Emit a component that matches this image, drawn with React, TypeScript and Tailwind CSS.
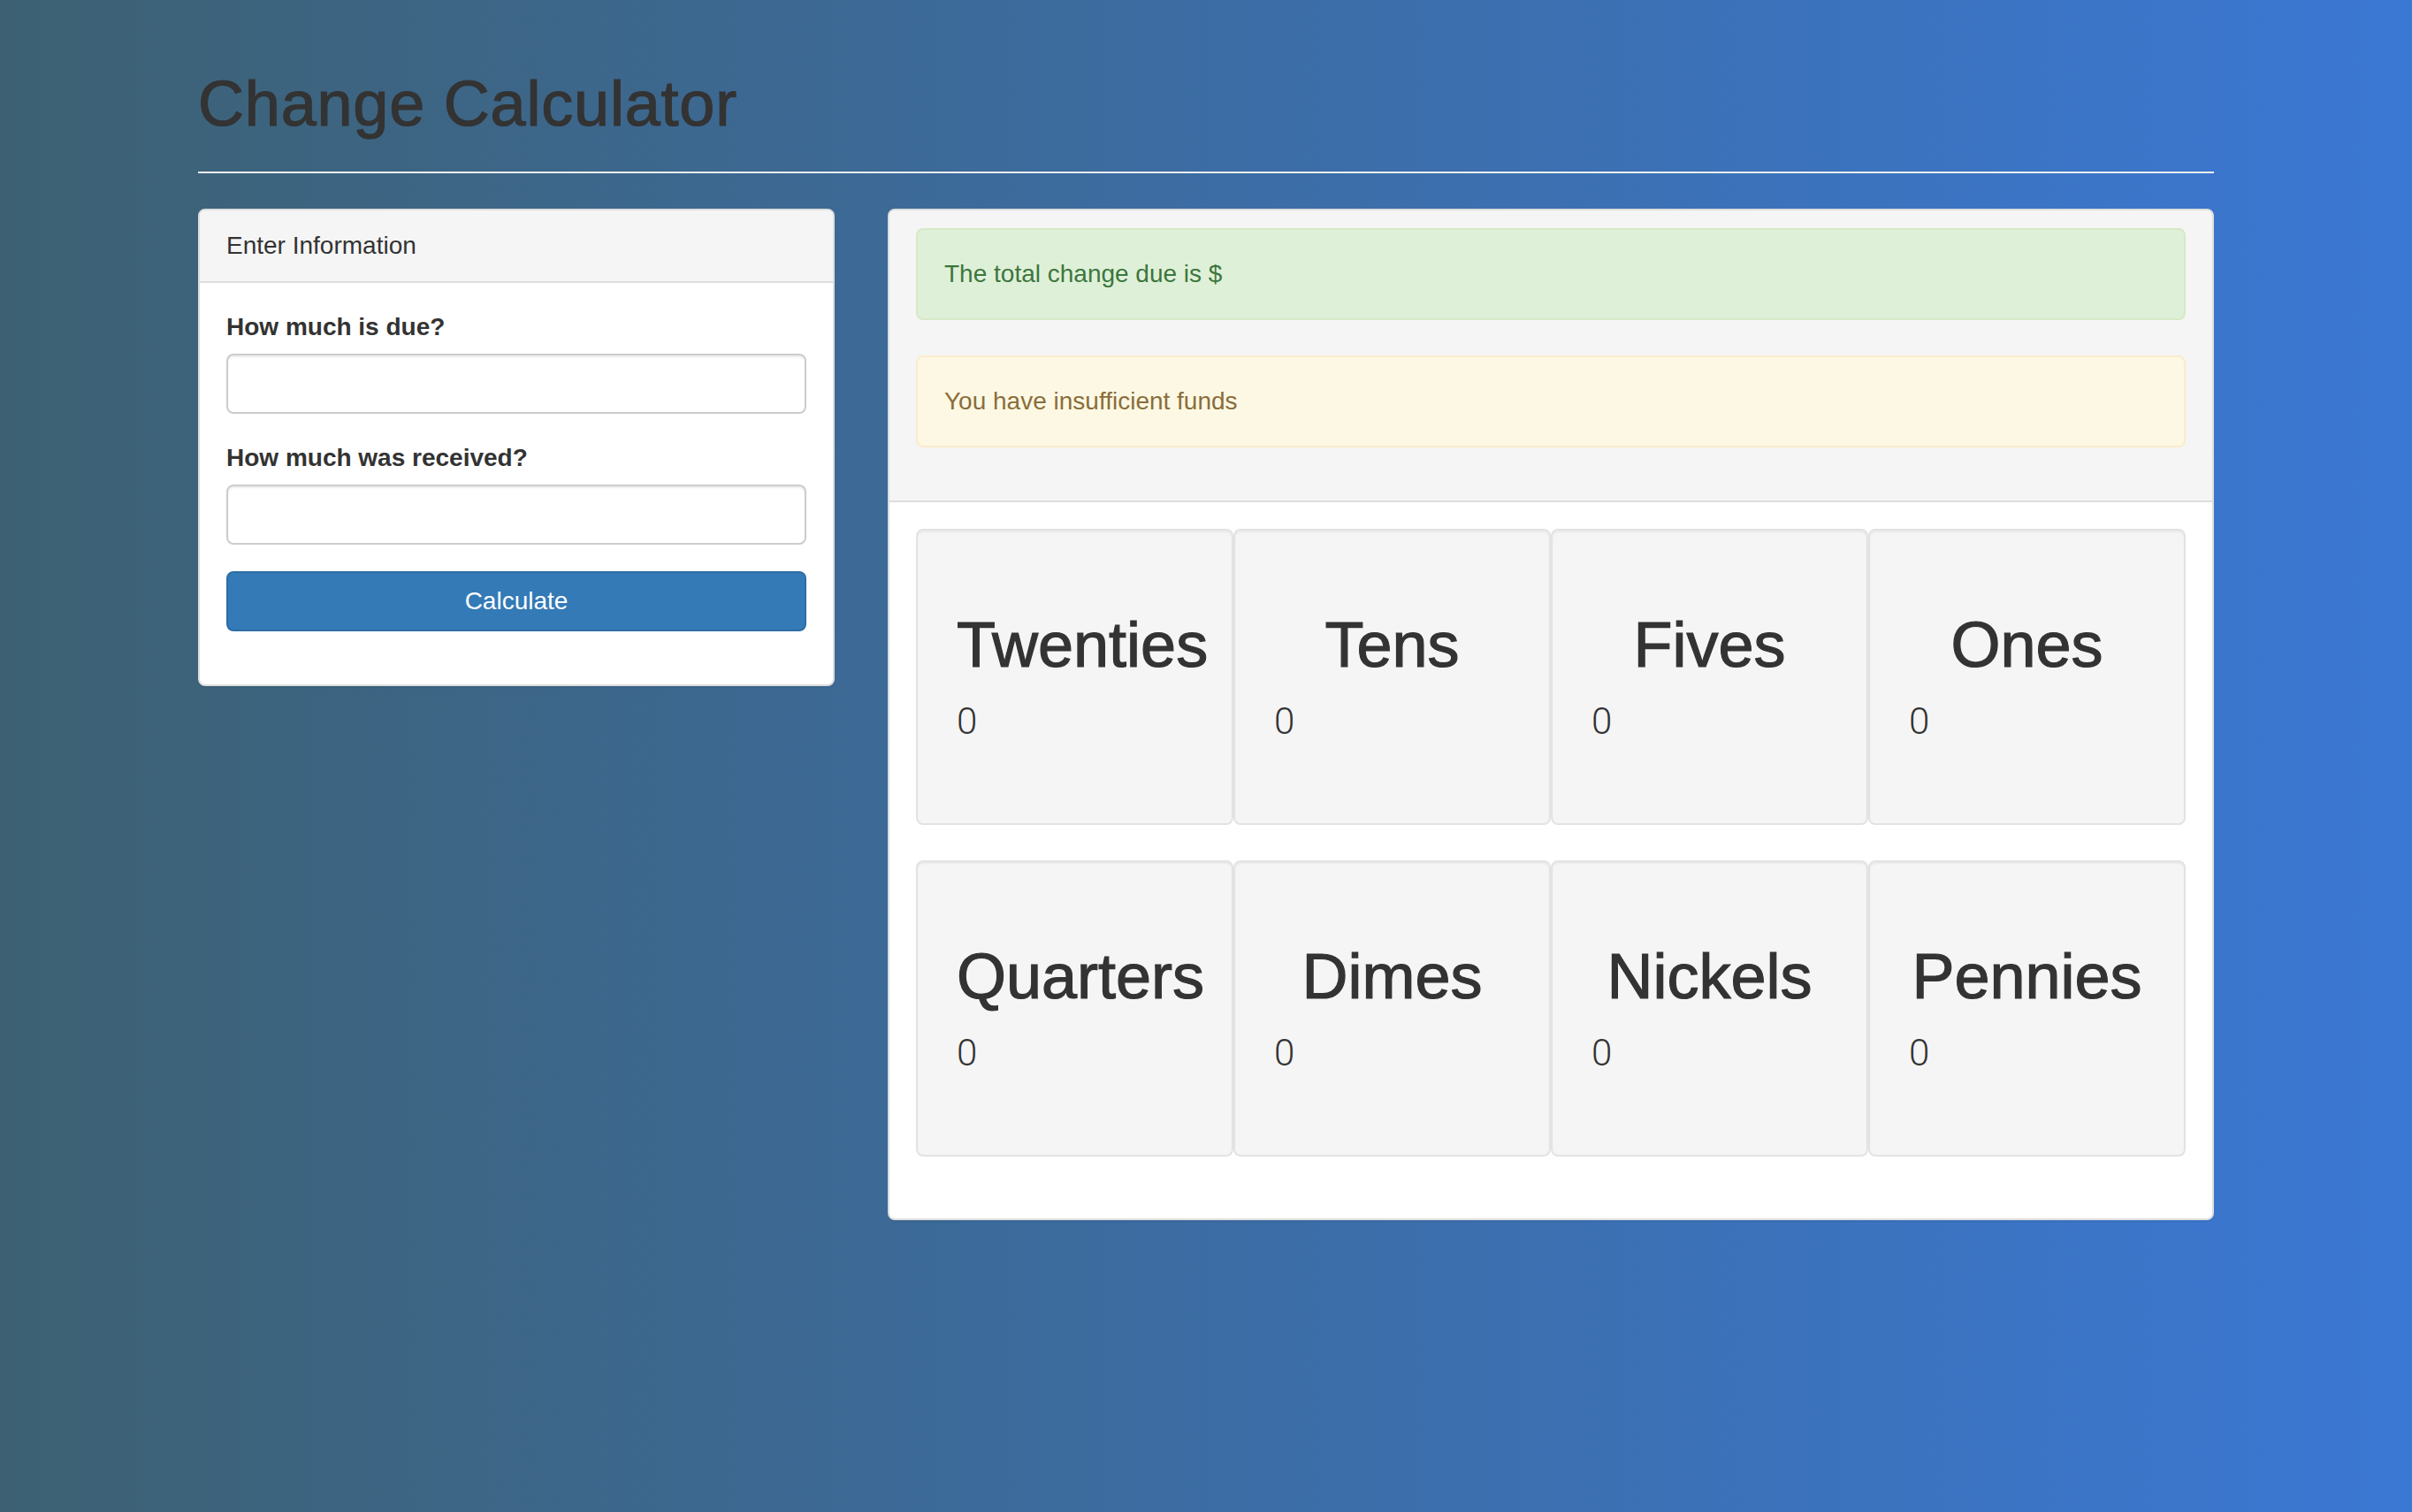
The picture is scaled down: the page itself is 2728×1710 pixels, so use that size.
const bills = ['Twenties', 'Tens', 'Fives', 'Ones'];
const coins = ['Quarters', 'Dimes', 'Nickels', 'Pennies'];

const Well = ({ title, count }: { title: string; count: number }) => {
  return (
    <div className="h-[335px] px-[44px] pt-[44px] bg-[#f5f5f5] border-2 border-[#e3e3e3] rounded-[8px] shadow-[inset_0_2px_2px_rgba(0,0,0,0.05)] text-center">
      <h1 className="mt-[46px] mb-[17px] text-[72px] leading-[79px] font-medium text-[#333] whitespace-nowrap [-webkit-text-stroke:1.2px_#333]">
        {title}
      </h1>
      <p
        className="text-left text-[42px] leading-[59px] font-light text-[#333]"
        style={{ fontFamily: 'Roboto, "Liberation Sans", sans-serif' }}>
        {count}
      </p>
    </div>
  );
};

export default function App() {
  return (
    <div
      className="min-h-screen bg-[linear-gradient(to_right,#3d6173,#3b78d4)] text-[#333] text-[28px] leading-[40px]"
      style={{ fontFamily: '"Liberation Sans", Arial, sans-serif' }}>
      <div className="ml-[224px] w-[2280px] pt-[78px] pb-[40px]">
        <h1 className="mb-[-3px] text-[72px] leading-[79px] font-medium tracking-[0.8px] text-[#333] [-webkit-text-stroke:1.2px_#333]">
          Change Calculator
        </h1>
        <hr className="my-[40px] border-0 border-t-2 border-[#eeeeee]" />

        <div className="flex items-start gap-[60px]">
          {/* Input panel */}
          <div className="w-[720px] bg-white border-2 border-[#dddddd] rounded-[8px] shadow-[0_2px_2px_rgba(0,0,0,0.05)]">
            <div className="px-[30px] py-[20px] bg-[#f5f5f5] border-b-2 border-[#dddddd] rounded-t-[6px]">Enter Information</div>
            <div className="px-[30px] pt-[30px] pb-[30px]">
              <label className="block mb-[10px] font-bold">How much is due?</label>
              <input
                type="text"
                className="block w-full h-[68px] mb-[30px] px-[24px] bg-white border-2 border-[#cccccc] rounded-[8px] shadow-[inset_0_2px_2px_rgba(0,0,0,0.075)] outline-none"
              />
              <label className="block mb-[10px] font-bold">How much was received?</label>
              <input
                type="text"
                className="block w-full h-[68px] mb-[30px] px-[24px] bg-white border-2 border-[#cccccc] rounded-[8px] shadow-[inset_0_2px_2px_rgba(0,0,0,0.075)] outline-none"
              />
              <button className="block w-full h-[68px] mb-[30px] bg-[#337ab7] border-2 border-[#2e6da4] rounded-[8px] text-white">
                Calculate
              </button>
            </div>
          </div>

          {/* Result panel */}
          <div className="w-[1500px] bg-white border-2 border-[#dddddd] rounded-[8px] shadow-[0_2px_2px_rgba(0,0,0,0.05)]">
            <div className="px-[30px] py-[20px] bg-[#f5f5f5] border-b-2 border-[#dddddd] rounded-t-[6px]">
              <div className="mb-[40px] p-[30px] bg-[#dff0d8] border-2 border-[#d6e9c6] rounded-[8px] text-[#3c763d]">
                The total change due is $
              </div>
              <div className="mb-[40px] p-[30px] bg-[#fcf8e3] border-2 border-[#faebcc] rounded-[8px] text-[#8a6d3b]">
                You have insufficient funds
              </div>
            </div>
            <div className="p-[30px]">
              <div className="grid grid-cols-4 mb-[40px]">
                {bills.map((b) => (
                  <Well key={b} title={b} count={0} />
                ))}
              </div>
              <div className="grid grid-cols-4 mb-[40px]">
                {coins.map((c) => (
                  <Well key={c} title={c} count={0} />
                ))}
              </div>
            </div>
          </div>
        </div>
      </div>
    </div>
  );
}
